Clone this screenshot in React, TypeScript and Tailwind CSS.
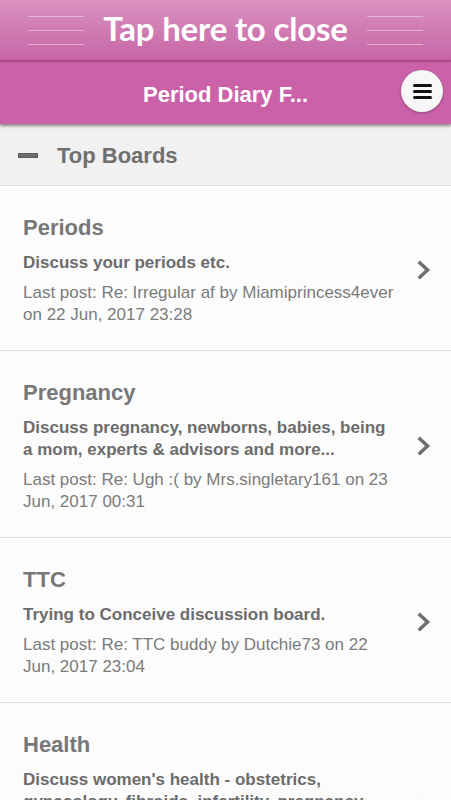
import React from 'react';

interface Board {
  title: string;
  description: string;
  lastPost: string;
}

const boards: Board[] = [
  {
    title: 'Periods',
    description: 'Discuss your periods etc.',
    lastPost: 'Last post: Re: Irregular af by Miamiprincess4ever on 22 Jun, 2017 23:28',
  },
  {
    title: 'Pregnancy',
    description: 'Discuss pregnancy, newborns, babies, being a mom, experts & advisors and more...',
    lastPost: 'Last post: Re: Ugh :( by Mrs.singletary161 on 23 Jun, 2017 00:31',
  },
  {
    title: 'TTC',
    description: 'Trying to Conceive discussion board.',
    lastPost: 'Last post: Re: TTC buddy by Dutchie73 on 22 Jun, 2017 23:04',
  },
  {
    title: 'Health',
    description: "Discuss women's health - obstetrics, gynecology, fibroids, infertility, pregnancy, and more",
    lastPost: 'Last post: Re: Bleeding after sex by Sunshine22 on 22 Jun, 2017 22:10',
  },
];

const Chevron = () => (
  <svg width="14" height="20" viewBox="0 0 14 20" className="shrink-0">
    <path d="M3 3 L10.5 10 L3 17" fill="none" stroke="#707070" strokeWidth="3.6" strokeLinecap="square" strokeLinejoin="miter" />
  </svg>
);

const Lines = () => (
  <div className="flex flex-col gap-[13px] w-[56px]">
    <div className="h-px bg-white/40"></div>
    <div className="h-px bg-white/40"></div>
    <div className="h-px bg-white/40"></div>
  </div>
);

const App = () => {
  return (
    <div className="min-h-screen bg-[#fcfcfc] font-['Liberation_Sans',Arial,sans-serif]">
      {/* Close banner */}
      <div className="h-[62px] bg-gradient-to-b from-[#d991c0] to-[#c765a7] flex items-center justify-center gap-[19px] border-b-2 border-[#a94b8c]">
        <Lines />
        <span className="font-['Lato',sans-serif] font-bold text-[33px] text-white leading-none pb-[4px] tracking-[-0.2px]">Tap here to close</span>
        <Lines />
      </div>

      {/* Nav bar */}
      <div className="relative h-[62px] bg-[#cb62a9] flex items-center justify-center shadow-[0_2px_3px_rgba(0,0,0,0.45)] z-10">
        <span className="text-white font-bold text-[22px] mt-[2px]">Period Diary F...</span>
        <button className="absolute right-[8px] top-[8px] w-[42px] h-[42px] rounded-full bg-[#f7f7f7] shadow-[0_1px_3px_rgba(0,0,0,0.3)] flex flex-col items-center justify-center gap-[3px]">
          <span className="block w-[19px] h-[3px] bg-[#111] rounded-sm"></span>
          <span className="block w-[19px] h-[3px] bg-[#111] rounded-sm"></span>
          <span className="block w-[19px] h-[3px] bg-[#111] rounded-sm"></span>
        </button>
      </div>

      {/* Section header */}
      <div className="h-[62px] bg-[#f1f1f1] border-b border-[#e0e0e0] flex items-center pl-[18px]">
        <span className="block w-[20px] h-[5px] bg-[#6f6f6f] border border-[#5a5a5a] mt-[2px]"></span>
        <span className="ml-[19px] text-[22px] font-bold text-[#6f6f6f] mt-[2px]">Top Boards</span>
      </div>

      {/* Boards */}
      <div>
        {boards.map((b) => (
          <div key={b.title} className="flex items-center border-b border-[#e2e2e2] pl-[23px] pr-[20px] pt-[28px] pb-[24px]">
            <div className="flex-1 pr-[19px]">
              <div className="text-[22px] leading-[28px] font-bold text-[#777]">{b.title}</div>
              <div className="mt-[10px] text-[17px] leading-[22px] font-bold text-[#6c6c6c]">{b.description}</div>
              <div className="mt-[8px] text-[17px] leading-[22px] text-[#7b7b7b]">{b.lastPost}</div>
            </div>
            <Chevron />
          </div>
        ))}
      </div>
    </div>
  );
};

export default App;
